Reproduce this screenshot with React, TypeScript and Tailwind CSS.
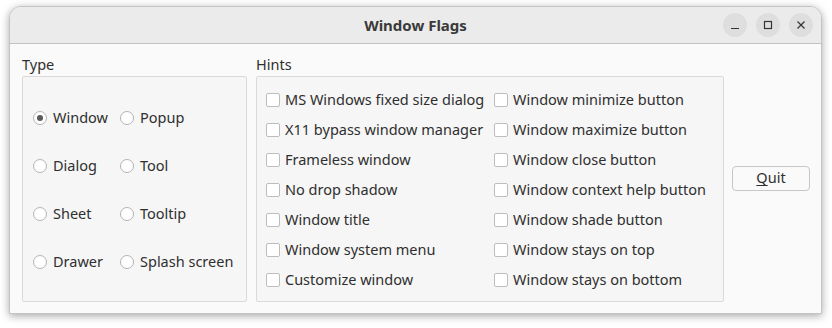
import React from "react";

const font = { fontFamily: '"Noto Sans", "Open Sans", sans-serif' };

function Radio({ label, checked }: { label: string; checked?: boolean }) {
  return (
    <div className="flex items-center gap-[6px]">
      <span className="w-[14px] h-[14px] rounded-full border border-[#b4b4b4] bg-white flex items-center justify-center">
        {checked && <span className="w-[6px] h-[6px] rounded-full bg-[#5a5a5a]" />}
      </span>
      <span>{label}</span>
    </div>
  );
}

function Check({ label }: { label: string }) {
  return (
    <div className="flex items-center gap-[5px]">
      <span className="w-[14px] h-[14px] rounded-[2px] border border-[#bdbdbd] bg-white" />
      <span>{label}</span>
    </div>
  );
}

export default function App() {
  const left = [
    "MS Windows fixed size dialog",
    "X11 bypass window manager",
    "Frameless window",
    "No drop shadow",
    "Window title",
    "Window system menu",
    "Customize window",
  ];
  const right = [
    "Window minimize button",
    "Window maximize button",
    "Window close button",
    "Window context help button",
    "Window shade button",
    "Window stays on top",
    "Window stays on bottom",
  ];
  return (
    <div className="w-[832px] h-[328px] bg-white pt-[6px] pl-[9px]" style={font}>
      <div className="w-[813px] h-[308px] rounded-t-[12px] bg-[#fafafa] border border-[#c4c4c4] shadow-[0_2px_8px_rgba(0,0,0,0.35)] overflow-hidden flex flex-col">
        <div className="h-[37px] bg-[#ebebeb] border-b border-[#c2c2c2] flex items-center relative">
          <div className="flex-1 text-center text-[15px] font-bold text-[#3a3a3a]">Window Flags</div>
          <div className="absolute right-[8px] top-[6px] flex gap-[9px]">
            <span className="w-[24px] h-[24px] rounded-full bg-[#dedede] flex items-center justify-center">
              <svg width="10" height="10" viewBox="0 0 10 10"><path d="M1 8.5h8" stroke="#333" strokeWidth="1.2" /></svg>
            </span>
            <span className="w-[24px] h-[24px] rounded-full bg-[#dedede] flex items-center justify-center">
              <svg width="10" height="10" viewBox="0 0 10 10"><rect x="1.5" y="1.5" width="7" height="7" fill="none" stroke="#333" strokeWidth="1.2" /></svg>
            </span>
            <span className="w-[24px] h-[24px] rounded-full bg-[#dedede] flex items-center justify-center">
              <svg width="10" height="10" viewBox="0 0 10 10"><path d="M1.5 1.5l7 7M8.5 1.5l-7 7" stroke="#333" strokeWidth="1.2" /></svg>
            </span>
          </div>
        </div>
        <div className="flex items-center pl-[12px] pt-[10px] text-[14.5px] text-[#2f2f2f]">
          <div className="flex flex-col w-[225px]">
            <div className="h-[20px] leading-[20px]">Type</div>
            <div className="mt-[2px] h-[226px] border border-[#dadada] rounded-[2px] bg-[#f6f6f6] pl-[10px] pt-[17px] pb-[15px] grid grid-cols-[87px_auto] grid-rows-4">
              <Radio label="Window" checked />
              <Radio label="Popup" />
              <Radio label="Dialog" />
              <Radio label="Tool" />
              <Radio label="Sheet" />
              <Radio label="Tooltip" />
              <Radio label="Drawer" />
              <Radio label="Splash screen" />
            </div>
          </div>
          <div className="flex flex-col w-[468px] ml-[9px]">
            <div className="h-[20px] leading-[20px]">Hints</div>
            <div className="mt-[2px] h-[226px] border border-[#dadada] rounded-[2px] bg-[#f6f6f6] pl-[9px] pt-[8px] pb-[6px] grid grid-cols-[228px_auto]">
              <div className="grid grid-rows-7">
                {left.map((l) => (
                  <Check key={l} label={l} />
                ))}
              </div>
              <div className="grid grid-rows-7">
                {right.map((l) => (
                  <Check key={l} label={l} />
                ))}
              </div>
            </div>
          </div>
          <button className="ml-[8px] w-[78px] h-[25px] border border-[#c6c6c6] rounded-[4px] bg-[#fafafa] text-[#2f2f2f]">
            <span className="underline underline-offset-2">Q</span>uit
          </button>
        </div>
      </div>
    </div>
  );
}
